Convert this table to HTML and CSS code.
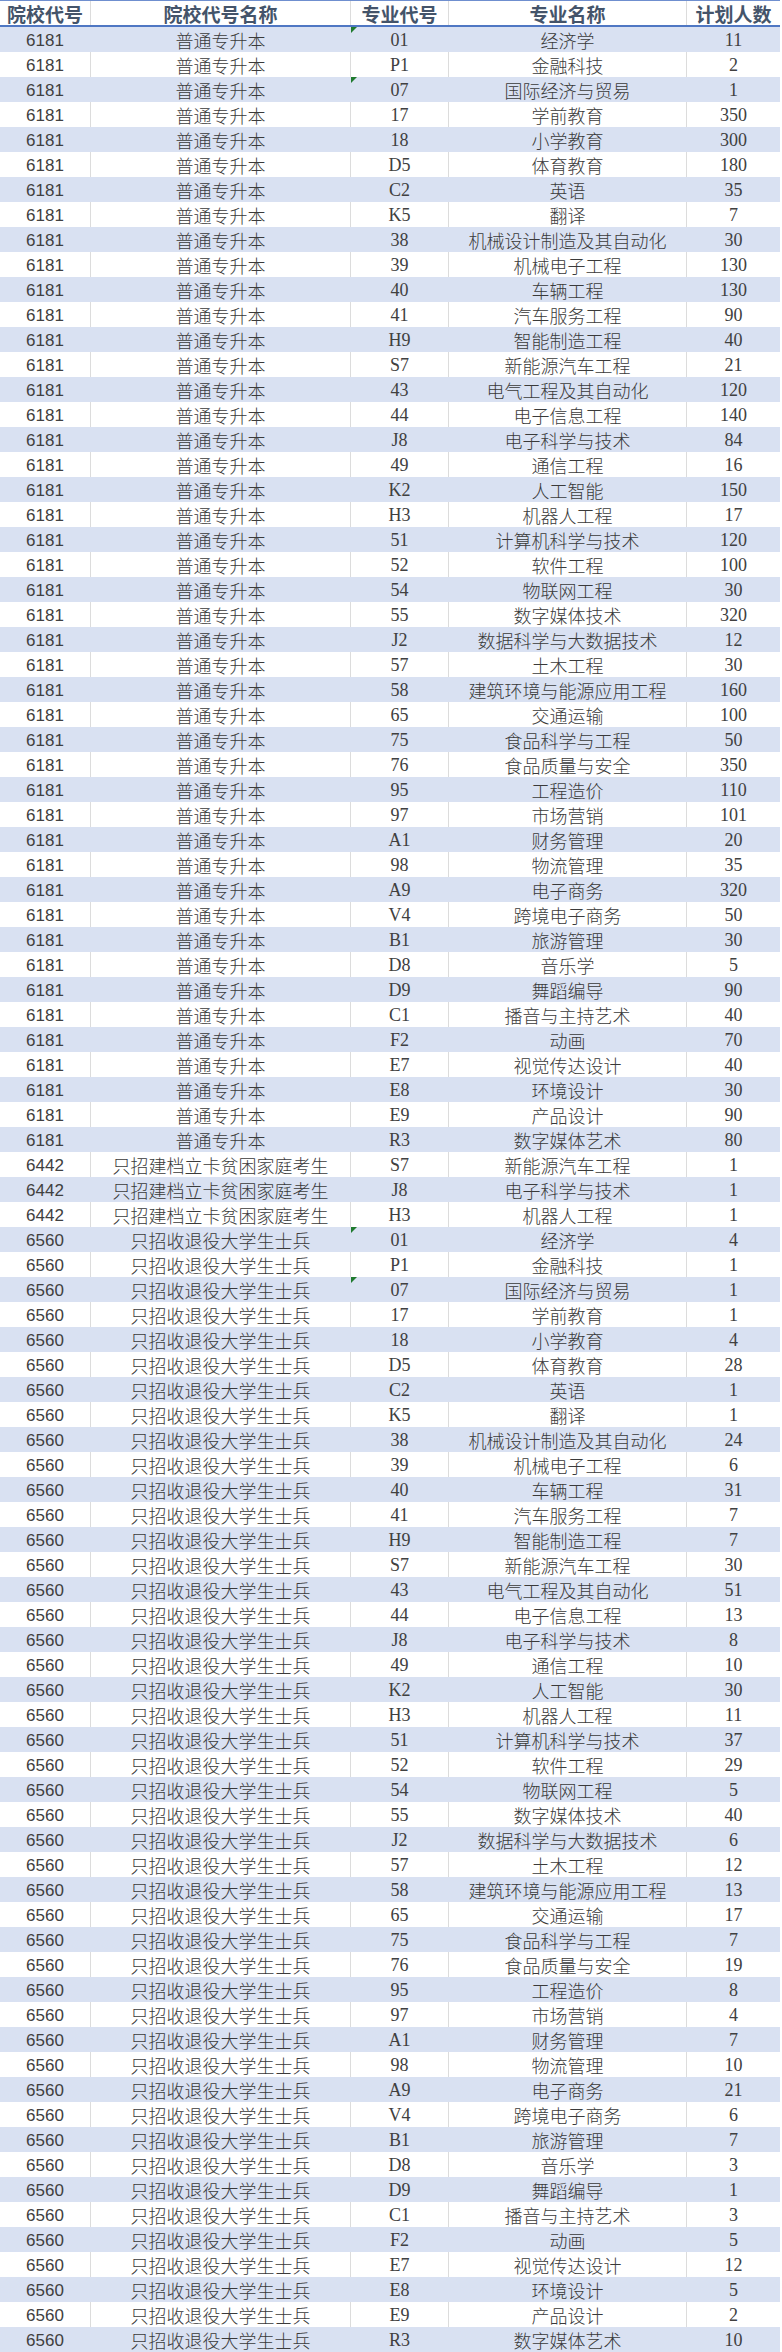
FILE: index.html
```html
<!DOCTYPE html>
<html lang="zh-CN">
<head>
<meta charset="utf-8">
<title>招生计划</title>
<link rel="stylesheet" href="styles.css">
</head>
<body>
<div class="sheet">
  <div class="row head"><div class="c c1">院校代号</div><div class="c c2">院校代号名称</div><div class="c c3">专业代号</div><div class="c c4">专业名称</div><div class="c c5">计划人数</div></div>
  <div class="row"><div class="c c1">6181</div><div class="c c2">普通专升本</div><div class="c c3 flag">01</div><div class="c c4">经济学</div><div class="c c5">11</div></div>
  <div class="row"><div class="c c1">6181</div><div class="c c2">普通专升本</div><div class="c c3">P1</div><div class="c c4">金融科技</div><div class="c c5">2</div></div>
  <div class="row"><div class="c c1">6181</div><div class="c c2">普通专升本</div><div class="c c3 flag">07</div><div class="c c4">国际经济与贸易</div><div class="c c5">1</div></div>
  <div class="row"><div class="c c1">6181</div><div class="c c2">普通专升本</div><div class="c c3">17</div><div class="c c4">学前教育</div><div class="c c5">350</div></div>
  <div class="row"><div class="c c1">6181</div><div class="c c2">普通专升本</div><div class="c c3">18</div><div class="c c4">小学教育</div><div class="c c5">300</div></div>
  <div class="row"><div class="c c1">6181</div><div class="c c2">普通专升本</div><div class="c c3">D5</div><div class="c c4">体育教育</div><div class="c c5">180</div></div>
  <div class="row"><div class="c c1">6181</div><div class="c c2">普通专升本</div><div class="c c3">C2</div><div class="c c4">英语</div><div class="c c5">35</div></div>
  <div class="row"><div class="c c1">6181</div><div class="c c2">普通专升本</div><div class="c c3">K5</div><div class="c c4">翻译</div><div class="c c5">7</div></div>
  <div class="row"><div class="c c1">6181</div><div class="c c2">普通专升本</div><div class="c c3">38</div><div class="c c4">机械设计制造及其自动化</div><div class="c c5">30</div></div>
  <div class="row"><div class="c c1">6181</div><div class="c c2">普通专升本</div><div class="c c3">39</div><div class="c c4">机械电子工程</div><div class="c c5">130</div></div>
  <div class="row"><div class="c c1">6181</div><div class="c c2">普通专升本</div><div class="c c3">40</div><div class="c c4">车辆工程</div><div class="c c5">130</div></div>
  <div class="row"><div class="c c1">6181</div><div class="c c2">普通专升本</div><div class="c c3">41</div><div class="c c4">汽车服务工程</div><div class="c c5">90</div></div>
  <div class="row"><div class="c c1">6181</div><div class="c c2">普通专升本</div><div class="c c3">H9</div><div class="c c4">智能制造工程</div><div class="c c5">40</div></div>
  <div class="row"><div class="c c1">6181</div><div class="c c2">普通专升本</div><div class="c c3">S7</div><div class="c c4">新能源汽车工程</div><div class="c c5">21</div></div>
  <div class="row"><div class="c c1">6181</div><div class="c c2">普通专升本</div><div class="c c3">43</div><div class="c c4">电气工程及其自动化</div><div class="c c5">120</div></div>
  <div class="row"><div class="c c1">6181</div><div class="c c2">普通专升本</div><div class="c c3">44</div><div class="c c4">电子信息工程</div><div class="c c5">140</div></div>
  <div class="row"><div class="c c1">6181</div><div class="c c2">普通专升本</div><div class="c c3">J8</div><div class="c c4">电子科学与技术</div><div class="c c5">84</div></div>
  <div class="row"><div class="c c1">6181</div><div class="c c2">普通专升本</div><div class="c c3">49</div><div class="c c4">通信工程</div><div class="c c5">16</div></div>
  <div class="row"><div class="c c1">6181</div><div class="c c2">普通专升本</div><div class="c c3">K2</div><div class="c c4">人工智能</div><div class="c c5">150</div></div>
  <div class="row"><div class="c c1">6181</div><div class="c c2">普通专升本</div><div class="c c3">H3</div><div class="c c4">机器人工程</div><div class="c c5">17</div></div>
  <div class="row"><div class="c c1">6181</div><div class="c c2">普通专升本</div><div class="c c3">51</div><div class="c c4">计算机科学与技术</div><div class="c c5">120</div></div>
  <div class="row"><div class="c c1">6181</div><div class="c c2">普通专升本</div><div class="c c3">52</div><div class="c c4">软件工程</div><div class="c c5">100</div></div>
  <div class="row"><div class="c c1">6181</div><div class="c c2">普通专升本</div><div class="c c3">54</div><div class="c c4">物联网工程</div><div class="c c5">30</div></div>
  <div class="row"><div class="c c1">6181</div><div class="c c2">普通专升本</div><div class="c c3">55</div><div class="c c4">数字媒体技术</div><div class="c c5">320</div></div>
  <div class="row"><div class="c c1">6181</div><div class="c c2">普通专升本</div><div class="c c3">J2</div><div class="c c4">数据科学与大数据技术</div><div class="c c5">12</div></div>
  <div class="row"><div class="c c1">6181</div><div class="c c2">普通专升本</div><div class="c c3">57</div><div class="c c4">土木工程</div><div class="c c5">30</div></div>
  <div class="row"><div class="c c1">6181</div><div class="c c2">普通专升本</div><div class="c c3">58</div><div class="c c4">建筑环境与能源应用工程</div><div class="c c5">160</div></div>
  <div class="row"><div class="c c1">6181</div><div class="c c2">普通专升本</div><div class="c c3">65</div><div class="c c4">交通运输</div><div class="c c5">100</div></div>
  <div class="row"><div class="c c1">6181</div><div class="c c2">普通专升本</div><div class="c c3">75</div><div class="c c4">食品科学与工程</div><div class="c c5">50</div></div>
  <div class="row"><div class="c c1">6181</div><div class="c c2">普通专升本</div><div class="c c3">76</div><div class="c c4">食品质量与安全</div><div class="c c5">350</div></div>
  <div class="row"><div class="c c1">6181</div><div class="c c2">普通专升本</div><div class="c c3">95</div><div class="c c4">工程造价</div><div class="c c5">110</div></div>
  <div class="row"><div class="c c1">6181</div><div class="c c2">普通专升本</div><div class="c c3">97</div><div class="c c4">市场营销</div><div class="c c5">101</div></div>
  <div class="row"><div class="c c1">6181</div><div class="c c2">普通专升本</div><div class="c c3">A1</div><div class="c c4">财务管理</div><div class="c c5">20</div></div>
  <div class="row"><div class="c c1">6181</div><div class="c c2">普通专升本</div><div class="c c3">98</div><div class="c c4">物流管理</div><div class="c c5">35</div></div>
  <div class="row"><div class="c c1">6181</div><div class="c c2">普通专升本</div><div class="c c3">A9</div><div class="c c4">电子商务</div><div class="c c5">320</div></div>
  <div class="row"><div class="c c1">6181</div><div class="c c2">普通专升本</div><div class="c c3">V4</div><div class="c c4">跨境电子商务</div><div class="c c5">50</div></div>
  <div class="row"><div class="c c1">6181</div><div class="c c2">普通专升本</div><div class="c c3">B1</div><div class="c c4">旅游管理</div><div class="c c5">30</div></div>
  <div class="row"><div class="c c1">6181</div><div class="c c2">普通专升本</div><div class="c c3">D8</div><div class="c c4">音乐学</div><div class="c c5">5</div></div>
  <div class="row"><div class="c c1">6181</div><div class="c c2">普通专升本</div><div class="c c3">D9</div><div class="c c4">舞蹈编导</div><div class="c c5">90</div></div>
  <div class="row"><div class="c c1">6181</div><div class="c c2">普通专升本</div><div class="c c3">C1</div><div class="c c4">播音与主持艺术</div><div class="c c5">40</div></div>
  <div class="row"><div class="c c1">6181</div><div class="c c2">普通专升本</div><div class="c c3">F2</div><div class="c c4">动画</div><div class="c c5">70</div></div>
  <div class="row"><div class="c c1">6181</div><div class="c c2">普通专升本</div><div class="c c3">E7</div><div class="c c4">视觉传达设计</div><div class="c c5">40</div></div>
  <div class="row"><div class="c c1">6181</div><div class="c c2">普通专升本</div><div class="c c3">E8</div><div class="c c4">环境设计</div><div class="c c5">30</div></div>
  <div class="row"><div class="c c1">6181</div><div class="c c2">普通专升本</div><div class="c c3">E9</div><div class="c c4">产品设计</div><div class="c c5">90</div></div>
  <div class="row"><div class="c c1">6181</div><div class="c c2">普通专升本</div><div class="c c3">R3</div><div class="c c4">数字媒体艺术</div><div class="c c5">80</div></div>
  <div class="row"><div class="c c1">6442</div><div class="c c2">只招建档立卡贫困家庭考生</div><div class="c c3">S7</div><div class="c c4">新能源汽车工程</div><div class="c c5">1</div></div>
  <div class="row"><div class="c c1">6442</div><div class="c c2">只招建档立卡贫困家庭考生</div><div class="c c3">J8</div><div class="c c4">电子科学与技术</div><div class="c c5">1</div></div>
  <div class="row"><div class="c c1">6442</div><div class="c c2">只招建档立卡贫困家庭考生</div><div class="c c3">H3</div><div class="c c4">机器人工程</div><div class="c c5">1</div></div>
  <div class="row"><div class="c c1">6560</div><div class="c c2">只招收退役大学生士兵</div><div class="c c3 flag">01</div><div class="c c4">经济学</div><div class="c c5">4</div></div>
  <div class="row"><div class="c c1">6560</div><div class="c c2">只招收退役大学生士兵</div><div class="c c3">P1</div><div class="c c4">金融科技</div><div class="c c5">1</div></div>
  <div class="row"><div class="c c1">6560</div><div class="c c2">只招收退役大学生士兵</div><div class="c c3 flag">07</div><div class="c c4">国际经济与贸易</div><div class="c c5">1</div></div>
  <div class="row"><div class="c c1">6560</div><div class="c c2">只招收退役大学生士兵</div><div class="c c3">17</div><div class="c c4">学前教育</div><div class="c c5">1</div></div>
  <div class="row"><div class="c c1">6560</div><div class="c c2">只招收退役大学生士兵</div><div class="c c3">18</div><div class="c c4">小学教育</div><div class="c c5">4</div></div>
  <div class="row"><div class="c c1">6560</div><div class="c c2">只招收退役大学生士兵</div><div class="c c3">D5</div><div class="c c4">体育教育</div><div class="c c5">28</div></div>
  <div class="row"><div class="c c1">6560</div><div class="c c2">只招收退役大学生士兵</div><div class="c c3">C2</div><div class="c c4">英语</div><div class="c c5">1</div></div>
  <div class="row"><div class="c c1">6560</div><div class="c c2">只招收退役大学生士兵</div><div class="c c3">K5</div><div class="c c4">翻译</div><div class="c c5">1</div></div>
  <div class="row"><div class="c c1">6560</div><div class="c c2">只招收退役大学生士兵</div><div class="c c3">38</div><div class="c c4">机械设计制造及其自动化</div><div class="c c5">24</div></div>
  <div class="row"><div class="c c1">6560</div><div class="c c2">只招收退役大学生士兵</div><div class="c c3">39</div><div class="c c4">机械电子工程</div><div class="c c5">6</div></div>
  <div class="row"><div class="c c1">6560</div><div class="c c2">只招收退役大学生士兵</div><div class="c c3">40</div><div class="c c4">车辆工程</div><div class="c c5">31</div></div>
  <div class="row"><div class="c c1">6560</div><div class="c c2">只招收退役大学生士兵</div><div class="c c3">41</div><div class="c c4">汽车服务工程</div><div class="c c5">7</div></div>
  <div class="row"><div class="c c1">6560</div><div class="c c2">只招收退役大学生士兵</div><div class="c c3">H9</div><div class="c c4">智能制造工程</div><div class="c c5">7</div></div>
  <div class="row"><div class="c c1">6560</div><div class="c c2">只招收退役大学生士兵</div><div class="c c3">S7</div><div class="c c4">新能源汽车工程</div><div class="c c5">30</div></div>
  <div class="row"><div class="c c1">6560</div><div class="c c2">只招收退役大学生士兵</div><div class="c c3">43</div><div class="c c4">电气工程及其自动化</div><div class="c c5">51</div></div>
  <div class="row"><div class="c c1">6560</div><div class="c c2">只招收退役大学生士兵</div><div class="c c3">44</div><div class="c c4">电子信息工程</div><div class="c c5">13</div></div>
  <div class="row"><div class="c c1">6560</div><div class="c c2">只招收退役大学生士兵</div><div class="c c3">J8</div><div class="c c4">电子科学与技术</div><div class="c c5">8</div></div>
  <div class="row"><div class="c c1">6560</div><div class="c c2">只招收退役大学生士兵</div><div class="c c3">49</div><div class="c c4">通信工程</div><div class="c c5">10</div></div>
  <div class="row"><div class="c c1">6560</div><div class="c c2">只招收退役大学生士兵</div><div class="c c3">K2</div><div class="c c4">人工智能</div><div class="c c5">30</div></div>
  <div class="row"><div class="c c1">6560</div><div class="c c2">只招收退役大学生士兵</div><div class="c c3">H3</div><div class="c c4">机器人工程</div><div class="c c5">11</div></div>
  <div class="row"><div class="c c1">6560</div><div class="c c2">只招收退役大学生士兵</div><div class="c c3">51</div><div class="c c4">计算机科学与技术</div><div class="c c5">37</div></div>
  <div class="row"><div class="c c1">6560</div><div class="c c2">只招收退役大学生士兵</div><div class="c c3">52</div><div class="c c4">软件工程</div><div class="c c5">29</div></div>
  <div class="row"><div class="c c1">6560</div><div class="c c2">只招收退役大学生士兵</div><div class="c c3">54</div><div class="c c4">物联网工程</div><div class="c c5">5</div></div>
  <div class="row"><div class="c c1">6560</div><div class="c c2">只招收退役大学生士兵</div><div class="c c3">55</div><div class="c c4">数字媒体技术</div><div class="c c5">40</div></div>
  <div class="row"><div class="c c1">6560</div><div class="c c2">只招收退役大学生士兵</div><div class="c c3">J2</div><div class="c c4">数据科学与大数据技术</div><div class="c c5">6</div></div>
  <div class="row"><div class="c c1">6560</div><div class="c c2">只招收退役大学生士兵</div><div class="c c3">57</div><div class="c c4">土木工程</div><div class="c c5">12</div></div>
  <div class="row"><div class="c c1">6560</div><div class="c c2">只招收退役大学生士兵</div><div class="c c3">58</div><div class="c c4">建筑环境与能源应用工程</div><div class="c c5">13</div></div>
  <div class="row"><div class="c c1">6560</div><div class="c c2">只招收退役大学生士兵</div><div class="c c3">65</div><div class="c c4">交通运输</div><div class="c c5">17</div></div>
  <div class="row"><div class="c c1">6560</div><div class="c c2">只招收退役大学生士兵</div><div class="c c3">75</div><div class="c c4">食品科学与工程</div><div class="c c5">7</div></div>
  <div class="row"><div class="c c1">6560</div><div class="c c2">只招收退役大学生士兵</div><div class="c c3">76</div><div class="c c4">食品质量与安全</div><div class="c c5">19</div></div>
  <div class="row"><div class="c c1">6560</div><div class="c c2">只招收退役大学生士兵</div><div class="c c3">95</div><div class="c c4">工程造价</div><div class="c c5">8</div></div>
  <div class="row"><div class="c c1">6560</div><div class="c c2">只招收退役大学生士兵</div><div class="c c3">97</div><div class="c c4">市场营销</div><div class="c c5">4</div></div>
  <div class="row"><div class="c c1">6560</div><div class="c c2">只招收退役大学生士兵</div><div class="c c3">A1</div><div class="c c4">财务管理</div><div class="c c5">7</div></div>
  <div class="row"><div class="c c1">6560</div><div class="c c2">只招收退役大学生士兵</div><div class="c c3">98</div><div class="c c4">物流管理</div><div class="c c5">10</div></div>
  <div class="row"><div class="c c1">6560</div><div class="c c2">只招收退役大学生士兵</div><div class="c c3">A9</div><div class="c c4">电子商务</div><div class="c c5">21</div></div>
  <div class="row"><div class="c c1">6560</div><div class="c c2">只招收退役大学生士兵</div><div class="c c3">V4</div><div class="c c4">跨境电子商务</div><div class="c c5">6</div></div>
  <div class="row"><div class="c c1">6560</div><div class="c c2">只招收退役大学生士兵</div><div class="c c3">B1</div><div class="c c4">旅游管理</div><div class="c c5">7</div></div>
  <div class="row"><div class="c c1">6560</div><div class="c c2">只招收退役大学生士兵</div><div class="c c3">D8</div><div class="c c4">音乐学</div><div class="c c5">3</div></div>
  <div class="row"><div class="c c1">6560</div><div class="c c2">只招收退役大学生士兵</div><div class="c c3">D9</div><div class="c c4">舞蹈编导</div><div class="c c5">1</div></div>
  <div class="row"><div class="c c1">6560</div><div class="c c2">只招收退役大学生士兵</div><div class="c c3">C1</div><div class="c c4">播音与主持艺术</div><div class="c c5">3</div></div>
  <div class="row"><div class="c c1">6560</div><div class="c c2">只招收退役大学生士兵</div><div class="c c3">F2</div><div class="c c4">动画</div><div class="c c5">5</div></div>
  <div class="row"><div class="c c1">6560</div><div class="c c2">只招收退役大学生士兵</div><div class="c c3">E7</div><div class="c c4">视觉传达设计</div><div class="c c5">12</div></div>
  <div class="row"><div class="c c1">6560</div><div class="c c2">只招收退役大学生士兵</div><div class="c c3">E8</div><div class="c c4">环境设计</div><div class="c c5">5</div></div>
  <div class="row"><div class="c c1">6560</div><div class="c c2">只招收退役大学生士兵</div><div class="c c3">E9</div><div class="c c4">产品设计</div><div class="c c5">2</div></div>
  <div class="row"><div class="c c1">6560</div><div class="c c2">只招收退役大学生士兵</div><div class="c c3">R3</div><div class="c c4">数字媒体艺术</div><div class="c c5">10</div></div>
</div>
</body>
</html>
```
FILE: styles.css
```css
html, body {
  margin: 0;
  padding: 0;
  background: #ffffff;
}

.sheet {
  width: 780px;
  border-top: 1px solid #6f8fcf;
  border-bottom: 2px solid #4f77c3;
}

.row {
  display: grid;
  grid-template-columns: 90px 260px 98px 238px 94px;
  height: 25px;
  background: #ffffff;
}

.row:nth-child(even) {
  background: #d9e1f2;
}

.c {
  position: relative;
  height: 25px;
  box-sizing: border-box;
  padding-top: 2px;
  line-height: 23px;
  text-align: center;
  white-space: nowrap;
  overflow: hidden;
  color: #3a3a3a;
  font-size: 18px;
  font-family: "Noto Sans CJK SC", sans-serif;
  font-weight: 300;
  border-left: 1px solid #dcdcdc;
}

.row:nth-child(even) .c {
  border-left-color: #d9e1f2;
}

.c1 {
  border-left: none;
  font-family: "Liberation Sans", Arial, sans-serif;
  font-weight: 400;
  font-size: 17px;
  color: #404040;
}

.c3, .c5 {
  font-family: "Liberation Serif", "Times New Roman", serif;
  font-weight: 400;
  font-size: 18px;
  color: #404040;
}

.head {
  height: 24px;
  border-bottom: 2px solid #4f77c3;
  background: #ffffff;
}

.head .c {
  height: 24px;
  padding-top: 1px;
  line-height: 23px;
  overflow: visible;
  font-family: "Noto Sans CJK SC", sans-serif;
  font-weight: 700;
  font-size: 19px;
  color: #44546a;
  border-left-color: #dcdcdc;
}

.flag::before {
  content: "";
  position: absolute;
  left: 0;
  top: 0;
  width: 0;
  height: 0;
  border-top: 6px solid #1f7a2e;
  border-right: 6px solid transparent;
}
```
